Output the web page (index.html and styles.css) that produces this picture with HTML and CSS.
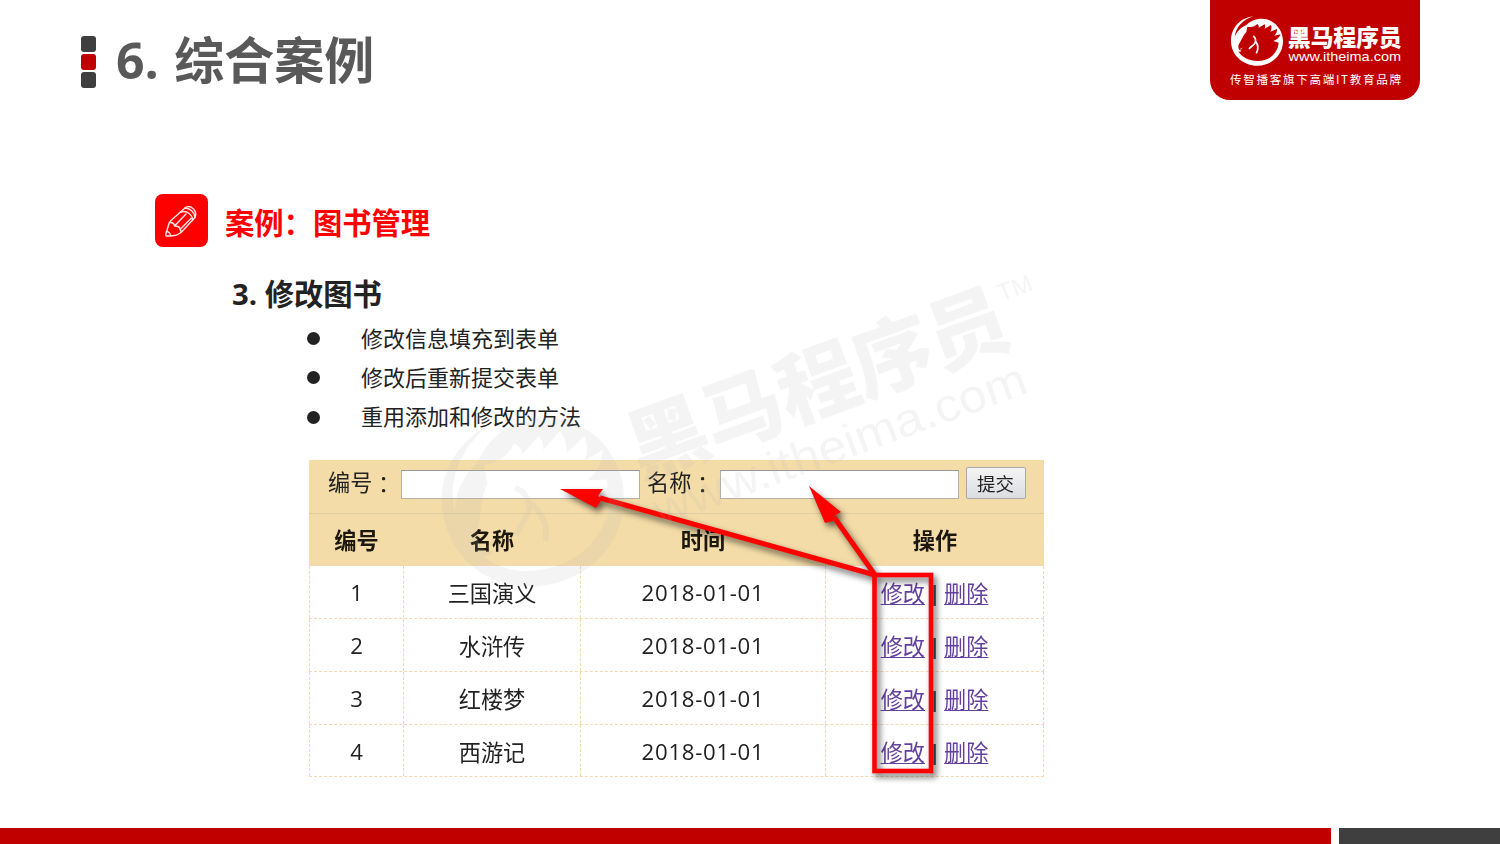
FILE: index.html
```html
<!DOCTYPE html>
<html lang="zh-CN">
<head>
<meta charset="utf-8">
<title>6. 综合案例</title>
<link rel="stylesheet" href="styles.css">
</head>
<body>
<svg width="0" height="0" class="defs">
  <defs>
    <g id="brand">
      <g transform="scale(.3333)">
        <path fill-rule="evenodd" d="M60 46C76 29 100 22 122 28C152 37 171 64 171 94C171 135 137 167 95 167C50 167 15 135 15 92C15 54 42 24 82 19C50 29 29 52 26 82C31 66 43 53 60 46ZM64 50L61 66C50 78 46 92 38 104C35 114 39 121 46 122C44 126 39 125 37 124C48 143 70 153 94 153C130 153 155 130 158 98L142 93C151 91 159 84 164 73L145 77C152 71 153 64 153 57L133 65C137 59 137 52 135 45L116 56C118 51 118 46 116 43L98 53C99 48 97 44 94 42C86 50 77 53 64 50Z"/>
        <path d="M82 78C90 84 91 95 85 102C80 108 75 109 69 117M88 92C97 104 98 117 91 130" fill="none" stroke="currentColor" stroke-width="5"/>
        <path d="M42 118L49 115" stroke="currentColor" stroke-width="2"/>
      </g>
      <text x="61.8" y="35.8" font-size="23" textLength="114" class="brand-name">黑马程序员</text>
      <text x="62.5" y="50.600" font-size="13.4" textLength="112.5" lengthAdjust="spacingAndGlyphs" class="brand-url">www.itheima.com</text>
    </g>
  </defs>
</svg>
<div class="slide">
  <header class="header">
    <div class="marks"><i></i><i class="red"></i><i></i></div>
    <h1>6. 综合案例</h1>
    <div class="logo">
      <svg width="210" height="100" viewBox="0 0 210 100">
        <use href="#brand" x="16" y="10"/>
        <text x="20" y="83.5" font-size="11.6" textLength="171" class="slogan">传智播客旗下高端IT教育品牌</text>
      </svg>
    </div>
  </header>
  <main class="content">
    <div class="section">
      <svg class="badge" width="53" height="53" viewBox="0 0 53 53">
        <rect width="53" height="53" rx="8" fill="#f00"/>
        <g fill="none" stroke="#fff" stroke-width="1.4" stroke-linejoin="round" stroke-linecap="round" opacity=".9">
          <path d="M11.500 42Q10.500 42 11 39.500L14 29.500Q14.500 28 16 26.500L30 14C35 10 43 16 40 23.500L26.500 38Q22 42.500 11.500 42Z"/>
          <path d="M14.500 28.500Q19 28 19.500 32Q25 32 25 35.500Q26.500 37 26 38.500M11.500 37.500Q15 38 15.500 41.500M19.500 32L31 20M25 35.500L36 24.500M26 18C32 16 38 21 37.500 26.500M30 14C35 14 40 19 40 23.500"/>
        </g>
      </svg>
      <h2>案例：图书管理</h2>
    </div>
    <h3>3. 修改图书</h3>
    <ul class="points">
      <li><span>修改信息填充到表单</span></li>
      <li><span>修改后重新提交表单</span></li>
      <li><span>重用添加和修改的方法</span></li>
    </ul>
    <div class="figure">
      <div class="form">
        <span class="label">编号<b lang="zh-TW">：</b></span><span class="field"></span>
        <span class="label second">名称<b lang="zh-TW">：</b></span><span class="field"></span>
        <span class="submit">提交</span>
      </div>
      <div class="row head"><span>编号</span><span>名称</span><span>时间</span><span>操作</span></div>
      <div class="row"><span>1</span><span>三国演义</span><span class="date">2018-01-01</span><span class="ops"><a>修改</a><em>|</em><a>删除</a></span></div>
      <div class="row"><span>2</span><span>水浒传</span><span class="date">2018-01-01</span><span class="ops"><a>修改</a><em>|</em><a>删除</a></span></div>
      <div class="row"><span>3</span><span>红楼梦</span><span class="date">2018-01-01</span><span class="ops"><a>修改</a><em>|</em><a>删除</a></span></div>
      <div class="row"><span>4</span><span>西游记</span><span class="date">2018-01-01</span><span class="ops"><a>修改</a><em>|</em><a>删除</a></span></div>
      <svg class="arrows" width="735" height="318" viewBox="309 460 735 318">
        <rect x="874.500" y="575" width="56.500" height="196" fill="none" stroke="#f00" stroke-width="4.600"/>
        <path d="M875 575L600 498M875 575L834 517" stroke="#f00" stroke-width="5"/>
        <path d="M560 489L603 489L598 496L602 499L596 508Z" fill="#f00"/>
        <path d="M809 486L841 512L834 516L833 521L825 523Z" fill="#f00"/>
      </svg>
    </div>
  </main>
  <svg class="watermark" width="1500" height="844" viewBox="0 0 1500 844">
    <g transform="translate(533 500) rotate(-20) scale(3.5) translate(-31 -31)">
      <use href="#brand"/>
      <text x="176" y="23.500" font-size="7" class="brand-url">TM</text>
    </g>
  </svg>
  <footer class="footer"><i class="red"></i><i class="dark"></i></footer>
</div>
</body>
</html>
```
FILE: styles.css
```css
* { box-sizing: border-box; margin: 0; padding: 0; }
body {
  width: 1500px;
  height: 844px;
  overflow: hidden;
  background: #fff;
  font-family: "Open Sans", "Noto Sans CJK SC", sans-serif;
  color: #222;
}
.defs { display: block; height: 0; }
.slide { position: relative; display: flex; flex-direction: column; height: 844px; }
.header { display: flex; height: 194px; padding: 0 80px 0 81px; }
.marks { display: flex; flex-direction: column; gap: 2px; padding-top: 36px; width: 35px; }
.marks i { width: 15px; height: 16px; border-radius: 3px; background: #3f3f3f; }
.marks .red { background: #c00000; }
h1 { flex: 1; font-size: 50px; line-height: 60px; padding-top: 30px; font-weight: 700; color: #595959; white-space: nowrap; word-spacing: 2.5px; }
.logo { width: 210px; height: 100px; background: #c00000; border-radius: 0 0 20px 20px; color: #fff; fill: #fff; }
.brand-name { font-family: "Noto Sans CJK SC", sans-serif; font-weight: 900; }
.brand-url { font-family: "Liberation Sans", sans-serif; }
.slogan { font-family: "Noto Sans CJK SC", sans-serif; }
.content { flex: 1; padding-left: 155px; }
.section { display: flex; gap: 17px; height: 53px; }
h2 { font-size: 29.3px; line-height: 58px; font-weight: 700; color: #f00; }
h3 { font-size: 29.3px; line-height: 40px; font-weight: 700; padding: 27px 0 0 77px; height: 72px; }
.points { list-style: none; padding-left: 152px; height: 141px; font-size: 22px; }
.points li { display: flex; align-items: center; height: 39.3px; }
.points li span { padding-bottom: 4px; }
.points li::before { content: ""; width: 13px; height: 13px; border-radius: 50%; background: #222; margin-right: 41px; }
.figure { position: relative; margin-left: 154px; width: 735px; height: 318px; font-size: 22.2px; background: #fff; filter: blur(.45px); }
.form { display: flex; height: 53.500px; padding: 7px 0 0 19px; background: #f4dca8; border-bottom: 1px solid #ddcda3; }
.label { width: 73px; line-height: 29px; white-space: nowrap; }
.label.second { margin-left: 7px; width: 72.500px; }
.label b { font-family: "Noto Sans CJK TC", sans-serif; font-weight: 400; position: relative; top: 2px; }
.field { width: 239px; height: 29px; margin-top: 3px; background: #fff; border: 1px solid #b5b0a8; border-top-color: #999; }
.submit { width: 60px; height: 32px; margin-left: 7px; border: 1px solid #aaa; border-radius: 2px; background: linear-gradient(#f4f4f4, #dcdde2); font-size: 18.500px; line-height: 31px; text-align: center; }
.row { display: grid; grid-template-columns: 94px 177px 245px 219px; height: 52.800px; border-bottom: 1px dashed #f3d8b4; border-right: 1px dashed #f3d8b4; }
.row span { display: flex; align-items: center; justify-content: center; border-left: 1px dashed #f3d8b4; padding: 1px 0 0 0; }
.head { background: #f4dca8; font-weight: 700; color: #1c1810; }
.row.head span { border-left-color: transparent; }
.row .date { letter-spacing: .7px; }
.row .ops { padding-right: 1px; }
.row a { color: #63409c; text-decoration: underline; text-decoration-thickness: 1px; text-underline-offset: 2px; }
.row em { width: 19px; text-align: center; font-style: normal; font-weight: 700; color: #24576a; }
.arrows { position: absolute; left: 0; top: 0; filter: drop-shadow(3px 4px 3px rgba(0, 0, 0, .6)); }
.watermark { position: absolute; left: 0; top: 0; color: #b2b2b2; fill: #b2b2b2; opacity: .13; }
.footer { display: flex; gap: 8px; height: 16px; }
.footer .red { width: 1331px; background: #c00000; }
.footer .dark { flex: 1; background: #3f3f3f; }
```
